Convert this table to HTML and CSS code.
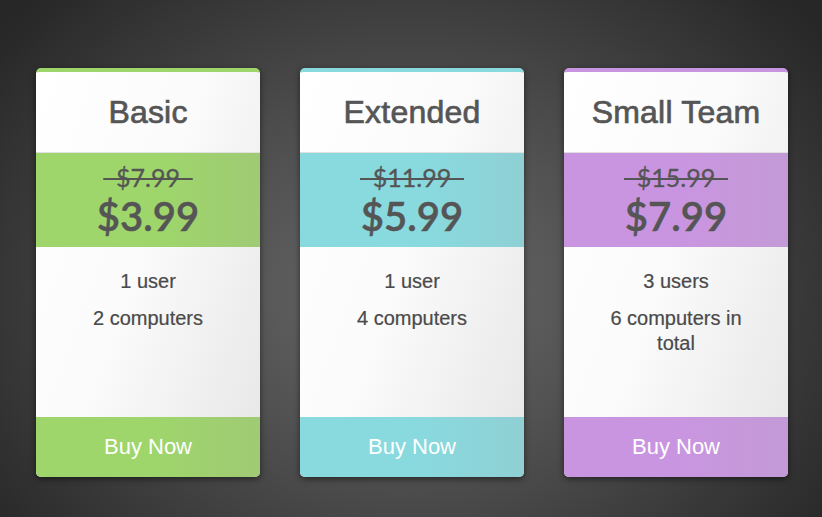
FILE: index.html
```html
<!DOCTYPE html>
<html>
<head>
<meta charset="utf-8">
<link rel="stylesheet" href="styles.css">
</head>
<body>
<div class="stage">
  <div class="card green">
    <div class="head">Basic</div>
    <div class="price"><span class="old">&nbsp;&nbsp;$7.99&nbsp;&nbsp;</span><span class="new">$3.99</span></div>
    <ul class="features"><li>1 user</li><li>2 computers</li></ul>
    <div class="buy">Buy Now</div>
  </div>
  <div class="card teal">
    <div class="head">Extended</div>
    <div class="price"><span class="old">&nbsp;&nbsp;$11.99&nbsp;&nbsp;</span><span class="new">$5.99</span></div>
    <ul class="features"><li>1 user</li><li>4 computers</li></ul>
    <div class="buy">Buy Now</div>
  </div>
  <div class="card purple">
    <div class="head">Small Team</div>
    <div class="price"><span class="old">&nbsp;&nbsp;$15.99&nbsp;&nbsp;</span><span class="new">$7.99</span></div>
    <ul class="features"><li>3 users</li><li>6 computers in total</li></ul>
    <div class="buy">Buy Now</div>
  </div>
</div>
</body>
</html>
```
FILE: styles.css
```css
html, body {
  margin: 0;
  padding: 0;
  height: 100%;
}
body {
  background: radial-gradient(ellipse 520px 420px at 410px 290px, #6a6a6a 0%, #4a4a4a 50%, #272727 100%);
  background-color: #262626;
  font-family: "Liberation Sans", Arial, sans-serif;
  color: #555;
}
.stage {
  display: flex;
  gap: 40px;
  padding: 68px 0 0 36px;
}
.card {
  width: 224px;
  height: 409px;
  box-sizing: border-box;
  border-radius: 5px;
  overflow: hidden;
  display: flex;
  flex-direction: column;
  background: linear-gradient(110deg, #ffffff 0%, #fbfbfb 45%, #e6e6e6 100%);
  box-shadow: 0 2px 6px rgba(0,0,0,0.5);
  border-top: 4px solid var(--c);
}
.green { --c: #9ed66b; --c2: #a0ca74; }
.teal { --c: #88dadf; --c2: #8fd0d4; }
.purple { --c: #c995e0; --c2: #c39ad6; }
.head {
  height: 81px;
  display: flex;
  align-items: center;
  justify-content: center;
  font-size: 32px;
  color: #555;
  -webkit-text-stroke: 0.7px #555;
  letter-spacing: 0.2px;
  border-bottom: 1px solid #e0e0e0;
  box-sizing: border-box;
  padding-top: 1px;
}
.price {
  height: 94px;
  background: linear-gradient(90deg, var(--c) 0%, var(--c) 55%, var(--c2) 100%);
  display: flex;
  flex-direction: column;
  align-items: center;
  font-family: Lato, "Open Sans", sans-serif;
  color: #555;
  box-sizing: border-box;
  padding-top: 10px;
}
.old {
  font-size: 25px;
  line-height: 28px;
  text-decoration: line-through;
  text-decoration-thickness: 2px;
  -webkit-text-stroke: 0.3px #555;
}
.new {
  font-size: 40px;
  line-height: 48px;
  font-weight: 600;
  margin-top: 1px;
  -webkit-text-stroke: 0.5px #555;
}
.features {
  flex: 1;
  list-style: none;
  margin: 0;
  padding: 22px 28px 0;
  text-align: center;
  font-size: 20px;
  line-height: 25px;
  color: #4a4a4a;
  -webkit-text-stroke: 0.2px #4a4a4a;
}
.features li {
  margin-bottom: 12px;
}
.buy {
  height: 60px;
  background: linear-gradient(90deg, var(--c) 0%, var(--c) 50%, var(--c2) 100%);
  color: #fff;
  font-size: 22px;
  display: flex;
  align-items: center;
  justify-content: center;
}
```
